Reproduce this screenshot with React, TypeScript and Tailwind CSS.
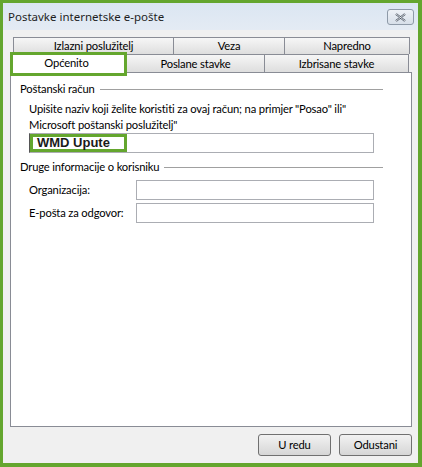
const font = "font-['Lato','Noto_Sans',sans-serif]";

function TabBack({ label, w }: { label: string; w: string }) {
    return (
        <div
            className={`${w} -ml-px first:ml-0 h-[17px] border border-b-0 border-[#898c95] bg-gradient-to-b from-[#f6f6f6] to-[#dedede] flex items-center justify-center`}
        >
            {label}
        </div>
    );
}

function GroupTitle({ label }: { label: string }) {
    return (
        <div className="flex items-center gap-[5px] pr-[28px] h-[16px]">
            <span className="whitespace-nowrap">{label}</span>
            <div className="h-px flex-1 bg-[#a0a0a0] mt-px" />
        </div>
    );
}

function Field({ label }: { label: string }) {
    return (
        <div className="flex items-center h-[20px]">
            <span className="w-[107px] whitespace-nowrap">{label}</span>
            <div className="h-[20px] w-[238px] border border-[#abadb3] bg-white" />
        </div>
    );
}

export default function App() {
    return (
        <div
            className={`w-[422px] h-[467px] border-[3px] border-r-4 border-b-4 border-[#64a62e] bg-[#f0f0f0] flex flex-col ${font} text-[11.2px] tracking-[-0.15px] leading-[16px] text-black`}
        >
            {/* title bar */}
            <div className="h-[27px] shrink-0 bg-gradient-to-b from-[#dbe6f2] to-[#e4ebf4] flex items-center pl-[5px] pr-[4px]">
                <span className="font-['Noto_Sans',sans-serif] tracking-normal text-[11.5px] text-[#1e1e1e]">
                    Postavke internetske e-pošte
                </span>
                <button
                    type="button"
                    className="ml-auto mt-[1px] w-[27px] h-[16px] rounded-[3px] border border-[#8e9aa8] bg-gradient-to-b from-[#eef2f7] to-[#d7dfe9] flex items-center justify-center"
                    aria-label="Close"
                >
                    <svg width="11" height="9" viewBox="0 0 11 9">
                        <path
                            d="M1 1 L10 8 M10 1 L1 8"
                            stroke="#4c5664"
                            strokeWidth="2.2"
                            fill="none"
                        />
                        <path
                            d="M1 1 L10 8 M10 1 L1 8"
                            stroke="#f4f6f8"
                            strokeWidth="0.8"
                            fill="none"
                        />
                    </svg>
                </button>
            </div>

            {/* body */}
            <div className="flex-1 flex flex-col pl-[7px] pr-[6px] pt-[7px]">
                {/* back tab row */}
                <div className="flex pl-[3px]">
                    <TabBack label="Izlazni poslužitelj" w="w-[161px]" />
                    <TabBack label="Veza" w="w-[112px]" />
                    <TabBack label="Napredno" w="w-[126px]" />
                </div>
                {/* front tab row */}
                <div className="flex h-[18px] relative">
                    <div className="w-[117px] h-[24px] -mt-[2px] z-10 bg-white border-[3px] border-[#64a62e] flex justify-center">
                        <span className="ml-[-4px]">Općenito</span>
                    </div>
                    <div className="w-[139px] h-[18px] -ml-px border border-b-0 border-[#898c95] bg-gradient-to-b from-[#f6f6f6] to-[#dedede] flex items-center justify-center">
                        Poslane stavke
                    </div>
                    <div className="w-[145px] h-[18px] -ml-px border border-b-0 border-[#898c95] bg-gradient-to-b from-[#f6f6f6] to-[#dedede] flex items-center justify-center">
                        Izbrisane stavke
                    </div>
                </div>

                {/* tab panel */}
                <div className="h-[355px] w-[402px] border border-[#898c95] bg-white pl-[9px] pt-[8px] flex flex-col">
                    <GroupTitle label="Poštanski račun" />
                    <div className="pl-[9px] mt-[4px]">
                        <p>
                            Upišite naziv koji želite koristiti za ovaj račun; na primjer "Posao" ili"
                            <br />
                            Microsoft poštanski poslužitelj"
                        </p>
                        <div className="w-[345px] h-[20px] border border-[#abadb3] border-l-[#555] bg-white flex">
                            <div className="w-[97px] h-[18px] border-[3px] border-[#64a62e] flex items-center pl-[4px] font-['Liberation_Sans',Arial,sans-serif] font-bold tracking-normal text-[13px] text-[#1a1a1a]">
                                WMD Upute
                            </div>
                        </div>
                    </div>
                    <div className="mt-[6px]">
                        <GroupTitle label="Druge informacije o korisniku" />
                    </div>
                    <div className="pl-[9px] mt-[5px] flex flex-col gap-[3px]">
                        <Field label="Organizacija:" />
                        <Field label="E-pošta za odgovor:" />
                    </div>
                </div>

                {/* buttons */}
                <div className="flex justify-end gap-[8px] mt-[7px]">
                    <button
                        type="button"
                        className="w-[73px] h-[22px] rounded-[3px] border border-[#707070] bg-gradient-to-b from-[#f2f2f2] to-[#d6d6d6]"
                    >
                        U redu
                    </button>
                    <button
                        type="button"
                        className="w-[73px] h-[22px] rounded-[3px] border border-[#707070] bg-gradient-to-b from-[#f2f2f2] to-[#d6d6d6]"
                    >
                        Odustani
                    </button>
                </div>
            </div>
        </div>
    );
}
